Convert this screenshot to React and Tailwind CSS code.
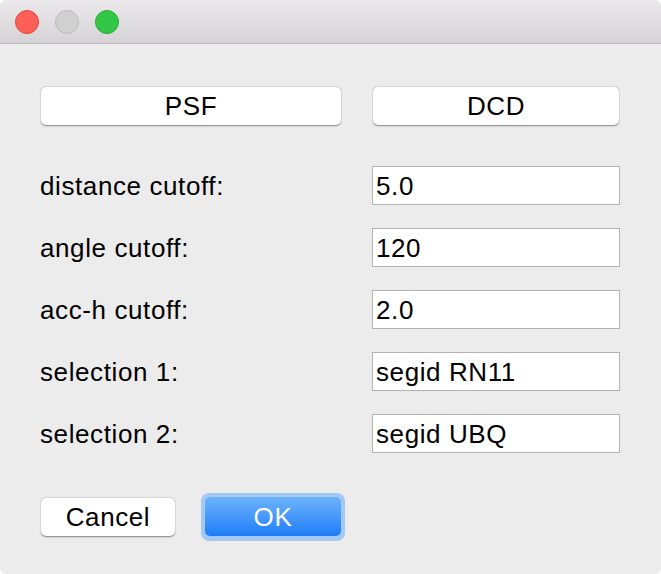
const font = { fontFamily: '"Liberation Sans", Arial, sans-serif' };

const fields = [
  { label: 'distance cutoff:', value: '5.0' },
  { label: 'angle cutoff:', value: '120' },
  { label: 'acc-h cutoff:', value: '2.0' },
  { label: 'selection 1:', value: 'segid RN11' },
  { label: 'selection 2:', value: 'segid UBQ' },
];

const App = () => {
  return (
    <div className="w-[661px] h-[574px] bg-white" style={font}>
      <div className="w-full h-full flex flex-col rounded-[6px] overflow-hidden bg-[#ececec]">
        {/* title bar */}
        <div className="h-[44px] shrink-0 flex items-center gap-[16px] pl-[15px] bg-gradient-to-b from-[#ebe9eb] to-[#d5d3d5] border-b border-[#bdbbbd]">
          <span className="w-[24px] h-[24px] rounded-full bg-[#fe5f57] border border-[#e2463f]" />
          <span className="w-[24px] h-[24px] rounded-full bg-[#d1d0d1] border border-[#bcbbbc]" />
          <span className="w-[24px] h-[24px] rounded-full bg-[#33c748] border border-[#27aa35]" />
        </div>

        <div className="flex flex-col pl-[41px] pt-[43px] text-[26px] tracking-[0.6px] text-black">
          {/* file buttons */}
          <div className="flex gap-[32px]">
            <button className="w-[300px] h-[38px] rounded-[5px] bg-white shadow-[0_0.5px_1.5px_rgba(0,0,0,0.45)] leading-none">PSF</button>
            <button className="w-[246px] h-[38px] rounded-[5px] bg-white shadow-[0_0.5px_1.5px_rgba(0,0,0,0.45)] leading-none">DCD</button>
          </div>

          {/* parameters */}
          <div className="flex flex-col gap-[23px] mt-[41px]">
            {fields.map(f => (
              <div key={f.label} className="flex items-center h-[39px]">
                <span className="w-[332px] -ml-[1px] pt-[2px]">{f.label}</span>
                <div className="w-[248px] h-[39px] bg-white border border-[#b3b3b3] flex items-center pl-[3px] pt-[1px]">{f.value}</div>
              </div>
            ))}
          </div>

          {/* actions */}
          <div className="flex items-center mt-[40px] gap-[26px]">
            <button className="w-[134px] h-[38px] rounded-[5px] bg-white shadow-[0_0.5px_1.5px_rgba(0,0,0,0.45)] leading-none">Cancel</button>
            <div className="p-[4px] rounded-[8px] bg-[#a3c8f4]">
              <button className="w-[136px] h-[39px] rounded-[5px] bg-gradient-to-b from-[#6cb3fa] to-[#1a7cf7] text-white leading-none">OK</button>
            </div>
          </div>
        </div>
      </div>
    </div>
  );
};

export default App;
